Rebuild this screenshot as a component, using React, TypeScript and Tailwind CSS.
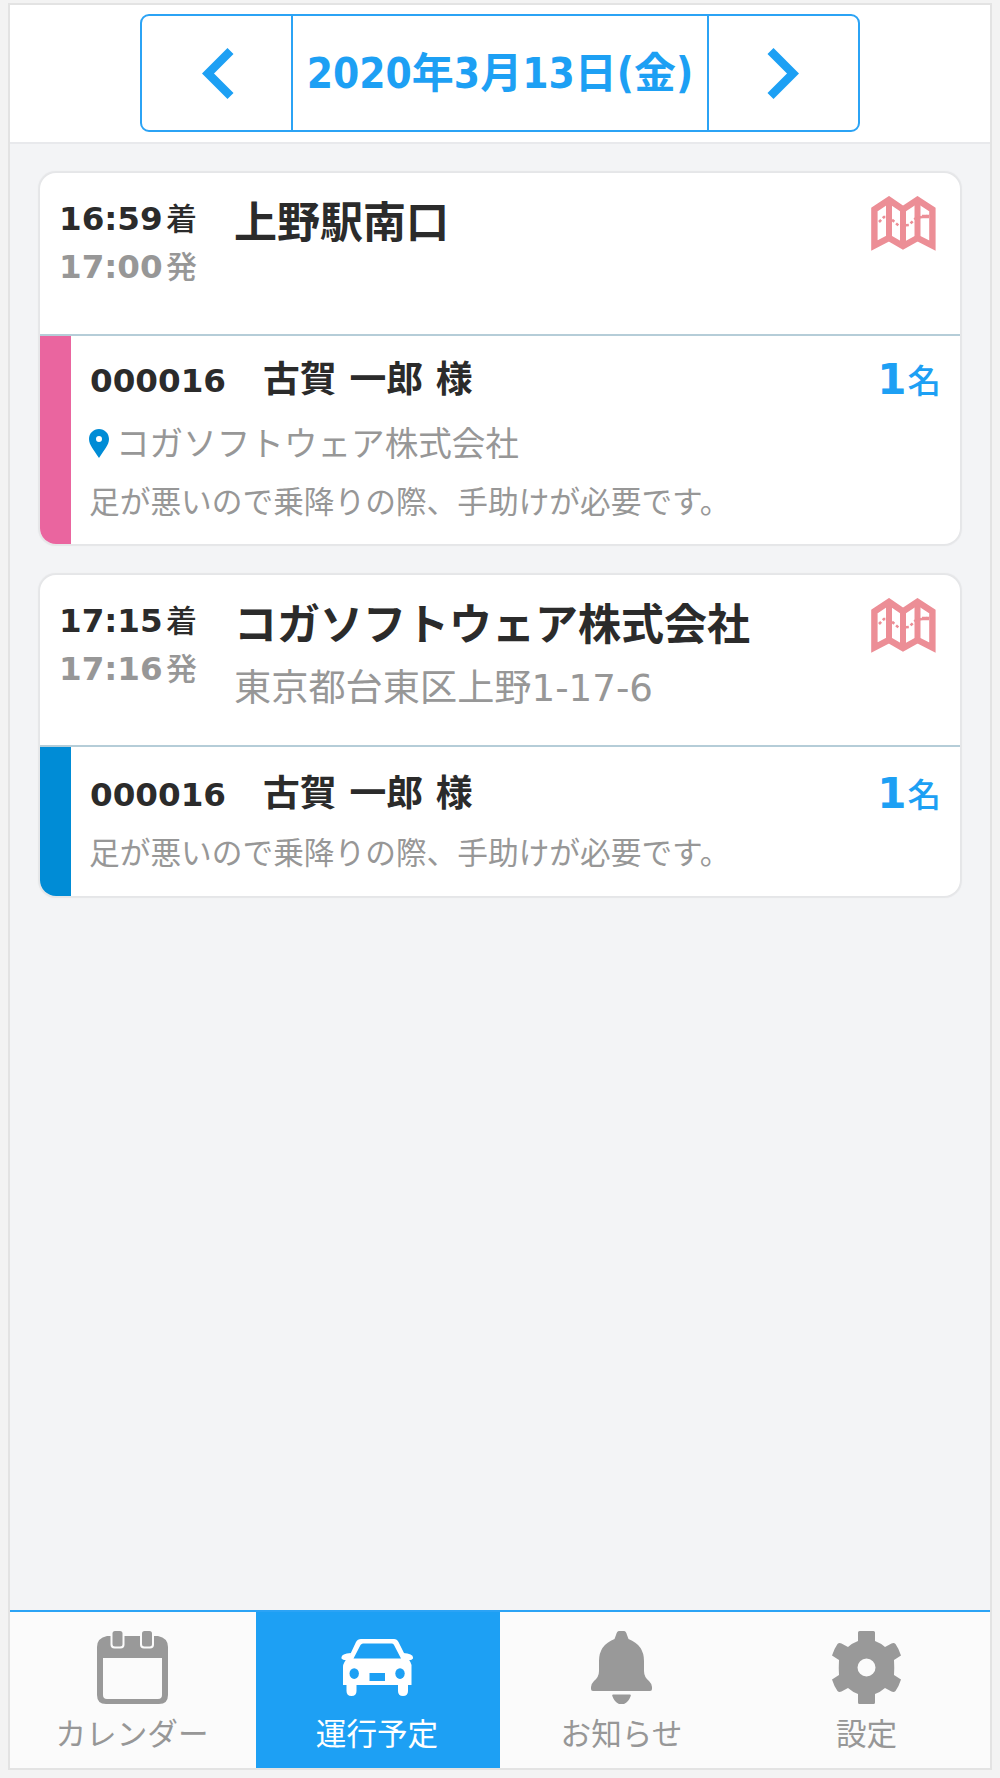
import React from "react";

type Passenger = {
  code: string;
  name: string;
  count: number;
  place?: string;
  note: string;
};

type Stop = {
  id: number;
  arrive: string;
  depart: string;
  title: string;
  address?: string;
  passenger: Passenger;
  headClass: string;
  bodyClass: string;
  barClass: string;
};

const stops: Stop[] = [
  {
    id: 1,
    arrive: "16:59",
    depart: "17:00",
    title: "上野駅南口",
    passenger: {
      code: "000016",
      name: "古賀 一郎 様",
      count: 1,
      place: "コガソフトウェア株式会社",
      note: "足が悪いので乗降りの際、手助けが必要です。",
    },
    headClass: "h-[163px]",
    bodyClass: "h-[208px] pt-[17px]",
    barClass: "bg-[#ea659f]",
  },
  {
    id: 2,
    arrive: "17:15",
    depart: "17:16",
    title: "コガソフトウェア株式会社",
    address: "東京都台東区上野1-17-6",
    passenger: {
      code: "000016",
      name: "古賀 一郎 様",
      count: 1,
      note: "足が悪いので乗降りの際、手助けが必要です。",
    },
    headClass: "h-[172px]",
    bodyClass: "h-[149px] pt-[20px]",
    barClass: "bg-[#008cd6]",
  },
];

const MapIcon = () => (
  <svg width="65" height="55" viewBox="0 0 65 55" fill="none" stroke="#ec8e96">
    <path
      strokeWidth="6.4"
      d="M3.4 13.5 L18 3.8 L32 13.5 L46.5 3.8 L61.4 13.5 V49.5 L46.5 42 L32 50 L18 42 L3.4 49.5 Z"
    />
    <path strokeWidth="6" d="M18 5 V43 M32 13 V50 M46.5 5 V43" />
    <path strokeWidth="2.6" strokeDasharray="3 2.4" d="M8 26 L13 21 L18 21 L28 30 L38 29 L45 22 L60 19.5" />
    <path strokeWidth="3.5" d="M51 20.5 H58" />
  </svg>
);

const PinIcon = () => (
  <svg width="20" height="29" viewBox="0 0 20 29">
    <path
      fill="#008cd6"
      fillRule="evenodd"
      d="M10 0 C4.4 0 0 4.4 0 10 C0 16 5 21 10 29 C15 21 20 16 20 10 C20 4.4 15.6 0 10 0 Z M10 7 A3 3 0 1 1 10 13 A3 3 0 1 1 10 7 Z"
    />
  </svg>
);

const CalendarIcon = () => (
  <svg width="71" height="73" viewBox="0 0 71 73" fill="#999">
    <path
      fillRule="evenodd"
      d="M10 5 H61 Q71 7 71 16 V64 Q71 73 62 73 H9 Q0 73 0 64 V16 Q0 7 10 5 Z M6 27 V64 Q6 68 10 68 H61 Q65 68 65 64 V27 Z"
    />
    <rect x="13.5" y="-3" width="14" height="20.5" rx="4" fill="#fbfbfb" />
    <rect x="43" y="-3" width="14" height="20.5" rx="4" fill="#fbfbfb" />
    <rect x="15.5" y="0" width="10" height="15.5" rx="2.5" />
    <rect x="45" y="0" width="10" height="15.5" rx="2.5" />
  </svg>
);

const CarIcon = () => (
  <svg width="73" height="58" viewBox="0 0 73 58" fill="#fff">
    <path
      fillRule="evenodd"
      d="M20 0 H53 Q56 0 57.5 3 L65 18 Q71 23 70.5 28 V46 H2 V28 Q2 23 8 18 L15 3 Q16.5 0 20 0 Z M22 4.5 Q20.5 4.5 19.5 6 L12.5 19.5 H60 L53 6 Q52.5 4.5 51 4.5 Z"
    />
    <path d="M10 14 L8 21 Q2 22 0.5 19.5 Q-0.5 14.5 10 14 Z M62 14 L64.5 21 Q71 22 72 19.5 Q73 14.5 62 14 Z" />
    <path d="M5.5 45 H15.5 V52 Q15.5 57 10.5 57 Q5.5 57 5.5 52 Z M57 45 H67 V52 Q67 57 62 57 Q57 57 57 52 Z" />
    <ellipse cx="13.2" cy="34.6" rx="4.7" ry="5.3" fill="#1da0f4" />
    <ellipse cx="59" cy="34.6" rx="4.7" ry="5.3" fill="#1da0f4" />
    <rect x="28.5" y="34" width="15.5" height="8" fill="#1da0f4" />
  </svg>
);

const BellIcon = () => (
  <svg width="61" height="73" viewBox="0 0 61 73" fill="#999">
    <path d="M28 0 H33 Q35 0 36 4 L37.5 8 Q53 14 53 30 V40 Q53 46 58 50 Q61 53 61 56 V58 Q61 60 59 60 H2 Q0 60 0 58 V56 Q0 53 3 50 Q8 46 8 40 V30 Q8 14 23.5 8 L25 4 Q26 0 28 0 Z" />
    <path d="M22 63.5 H39 Q40.5 63.5 39.5 65.5 Q37.5 71 33 73 H28 Q23.5 71 21.5 65.5 Q20.5 63.5 22 63.5 Z" />
  </svg>
);

const GearIcon = () => (
  <svg width="69" height="73" viewBox="0 0 69 73" fill="#999">
    <path
      fillRule="evenodd"
      d="M27.5 0 H41.5 Q43 0 43 1.5 V10 Q48.5 12 53 16 L59.5 12.5 Q62 11.5 63.5 13 Q67 18 69 24.5 L62 29 Q62.5 37 62 44 L69 48.5 Q67 55 63.5 60 Q62 61.5 59.5 60.5 L53 57 Q48.5 61 43 63 V71.5 Q43 73 41.5 73 H27.5 Q26 73 26 71.5 V63 Q20.5 61 16 57 L9.5 60.5 Q7 61.5 5.5 60 Q2 55 0 48.5 L7 44 Q6.5 37 7 29 L0 24.5 Q2 18 5.5 13 Q7 11.5 9.5 12.5 L16 16 Q20.5 12 26 10 V1.5 Q26 0 27.5 0 Z M34.5 27.5 A9 9 0 1 0 34.5 45.5 A9 9 0 1 0 34.5 27.5 Z"
    />
  </svg>
);

const Chevron = ({ d }: { d: string }) => (
  <svg width="32" height="51" viewBox="0 0 32 51" fill="none" stroke="#1da0f4" strokeWidth="8.5">
    <path d={d} strokeLinejoin="miter" />
  </svg>
);

const tabs = [
  { label: "カレンダー", icon: <CalendarIcon />, active: false },
  { label: "運行予定", icon: <CarIcon />, active: true },
  { label: "お知らせ", icon: <BellIcon />, active: false },
  { label: "設定", icon: <GearIcon />, active: false },
];

const TimeRow = ({ time, suffix, className }: { time: string; suffix: string; className: string }) => (
  <div className={`flex h-12 items-center whitespace-nowrap ${className}`}>
    <span className="w-[107px] text-[32.6px] font-bold">{time}</span>
    <span className="pt-px text-[31px] font-medium">{suffix}</span>
  </div>
);

const StopCard = ({ stop }: { stop: Stop }) => {
  const { passenger } = stop;

  return (
    <div className="overflow-hidden rounded-[16px] bg-white shadow-[0_0_1px_1.5px_#e5e6e8]">
      <div className={`flex border-b-2 border-[#b5cdd8] pl-[19px] pr-6 ${stop.headClass}`}>
        <div className="w-[175px] shrink-0 pt-[22px]">
          <TimeRow time={stop.arrive} suffix="着" className="text-[#2b2b2b]" />
          <TimeRow time={stop.depart} suffix="発" className="text-[#979797]" />
        </div>
        <div className="grow whitespace-nowrap pt-[21px]">
          <h2 className="text-[43px] font-bold leading-[58px] text-[#2b2b2b]">{stop.title}</h2>
          {stop.address && (
            <p className="pt-[5px] text-[37.2px] leading-[58px] text-[#979797]">{stop.address}</p>
          )}
        </div>
        <div className="shrink-0 pt-[23px]">
          <MapIcon />
        </div>
      </div>

      <div className="flex">
        <div className={`w-[31px] shrink-0 ${stop.barClass}`} />
        <div className={`grow whitespace-nowrap pl-[18px] pr-[19px] ${stop.bodyClass}`}>
          <div className="flex h-[54px] items-center text-[#2b2b2b]">
            <span className="w-[174px] pl-px pt-[2px] text-[32.6px] font-bold">{passenger.code}</span>
            <span className="grow text-[36.8px] font-bold">{passenger.name}</span>
            <span className="flex items-center text-[#1da0f4]">
              <span className="pr-px text-[42px] font-bold leading-[54px]">{passenger.count}</span>
              <span className="pt-1 text-[33.5px] font-medium leading-[50px]">名</span>
            </span>
          </div>
          {passenger.place && (
            <div className="flex h-[66px] items-center pt-[7px] text-[33.6px] text-[#979797]">
              <PinIcon />
              <span className="pl-[7px] pt-[3px]">{passenger.place}</span>
            </div>
          )}
          <p className={`text-[30.7px] text-[#979797] ${passenger.place ? "leading-[60px]" : "leading-[66px]"}`}>
            {passenger.note}
          </p>
        </div>
      </div>
    </div>
  );
};

const App = () => {
  return (
    <div className="h-[1778px] w-[1000px] bg-[#f3f3f3] px-2 pb-2 pt-[3px] font-['DejaVu_Sans','Noto_Sans_CJK_JP',sans-serif]">
      <div className="flex h-[1767px] flex-col border-2 border-[#e3e3e3] bg-[#f3f4f6]">
        <header className="flex h-[139px] shrink-0 justify-center border-b-2 border-[#e8e9ec] bg-white pt-[9px]">
          <div className="flex h-[118px] w-[720px] rounded-[9px] border-2 border-[#2ba3f5]">
            <button className="flex w-[149px] items-center justify-center pl-[2px]">
              <Chevron d="M28.5 3 L6 25.5 L28.5 48" />
            </button>
            <div className="flex grow items-center justify-center whitespace-nowrap border-x-2 border-[#2ba3f5] font-['DejaVu_Sans_Condensed','Noto_Sans_CJK_JP',sans-serif] text-[42px] font-bold text-[#1da0f4]">
              2020年3月13日(金)
            </div>
            <button className="flex w-[149px] items-center justify-center pr-[2px]">
              <Chevron d="M3.5 3 L26 25.5 L3.5 48" />
            </button>
          </div>
        </header>

        <main className="flex grow flex-col gap-[31px] px-[30px] pt-[29px]">
          {stops.map((stop) => (
            <StopCard key={stop.id} stop={stop} />
          ))}
        </main>

        <nav className="grid h-[158px] shrink-0 grid-cols-[246px_244px_245px_1fr] border-t-2 border-[#2ba3f5]">
          {tabs.map((tab) => (
            <button
              key={tab.label}
              className={`flex flex-col items-center whitespace-nowrap pr-[2px] text-[30.6px] ${
                tab.active ? "bg-[#1da0f4] text-white" : "bg-[#fbfbfb] text-[#979797]"
              }`}
            >
              <span className="flex h-[94px] items-center pt-[17px]">{tab.icon}</span>
              <span className="leading-[57px]">{tab.label}</span>
            </button>
          ))}
        </nav>
      </div>
    </div>
  );
};

export default App;
